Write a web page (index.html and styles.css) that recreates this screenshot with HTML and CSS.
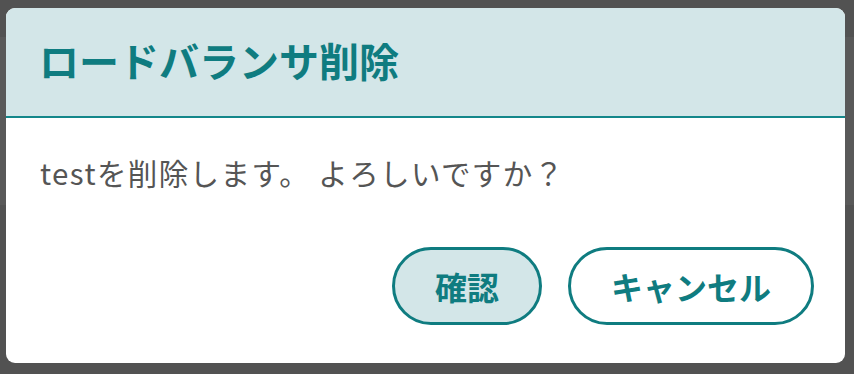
FILE: index.html
```html
<!DOCTYPE html>
<html lang="ja">
<head>
<meta charset="utf-8">
<link rel="stylesheet" href="styles.css">
</head>
<body>
<div class="page">
  <div class="page-band"></div>
</div>
<div class="overlay">
  <div class="dialog">
    <div class="dialog-header">
      <h1 class="dialog-title">ロードバランサ削除</h1>
    </div>
    <div class="dialog-body">
      <p class="dialog-message">testを削除します。 よろしいですか？</p>
      <div class="dialog-actions">
        <button class="btn btn-primary">確認</button>
        <button class="btn btn-secondary">キャンセル</button>
      </div>
    </div>
  </div>
</div>
</body>
</html>
```
FILE: styles.css
```css
html, body {
  margin: 0;
  padding: 0;
}
body {
  width: 854px;
  height: 374px;
  overflow: hidden;
  background: #525252;
  font-family: "Noto Sans CJK JP", "Noto Sans", sans-serif;
  position: relative;
}
.page {
  padding-top: 37px;
}
.page-band {
  height: 168px;
  background: #595959;
}
.overlay {
  position: absolute;
  inset: 0;
}
.dialog {
  position: absolute;
  left: 6px;
  top: 8px;
  width: 839px;
  height: 355px;
  background: #ffffff;
  border-radius: 9px;
  overflow: hidden;
  display: flex;
  flex-direction: column;
}
.dialog-header {
  height: 108px;
  background: #d3e6e8;
  border-bottom: 2px solid #13878a;
  display: flex;
  align-items: center;
  padding: 0 33px;
}
.dialog-title {
  margin: 0;
  font-size: 40px;
  font-weight: 700;
  color: #0f7c80;
  line-height: 1;
  margin-top: -4px;
}
.dialog-body {
  flex: 1;
  display: flex;
  flex-direction: column;
  padding: 33px 31px 38px 34px;
}
.dialog-message {
  margin: 0;
  font-size: 29.5px;
  letter-spacing: 1.4px;
  line-height: 42px;
  color: #555555;
}
.dialog-actions {
  margin-top: auto;
  display: flex;
  justify-content: flex-end;
  gap: 26px;
}
.btn {
  height: 78px;
  padding: 0 40px;
  border: 3px solid #0f7c80;
  border-radius: 39px;
  font-family: "Noto Sans CJK JP", "Noto Sans", sans-serif;
  font-size: 32px;
  font-weight: 700;
  color: #0f7c80;
  line-height: 1;
}
.btn-primary {
  background: #d3e6e8;
}
.btn-secondary {
  background: #ffffff;
}
```
